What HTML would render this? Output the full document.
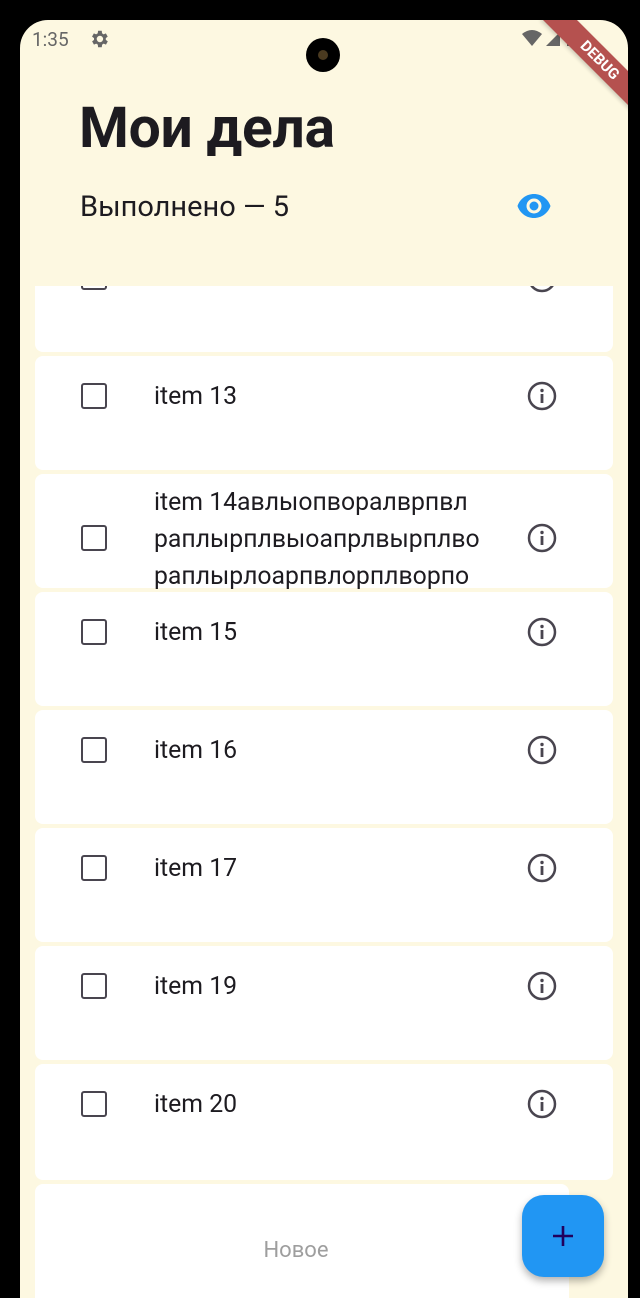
<!DOCTYPE html>
<html><head><meta charset="utf-8"><style>
*{margin:0;padding:0;box-sizing:border-box}
html,body{width:640px;height:1298px;overflow:hidden}
body{background:#000;position:relative;font-family:"Roboto","Liberation Sans","DejaVu Sans",sans-serif}
.screen{position:absolute;left:20px;top:20px;width:608px;height:1278px;background:#fdf8e1;border-radius:28px 28px 0 0;overflow:hidden}
.card{position:absolute;left:15px;width:578px;background:#fff;border-radius:8px}
.cb{position:absolute;left:46px;width:26px;height:26px;border:2.8px solid #49454f;border-radius:3px}
.txt{position:absolute;left:119px;font-size:24.8px;color:#1d1b20;line-height:37px;white-space:nowrap}
.info{position:absolute;left:491px;width:32px;height:32px}
</style></head><body>
<div class="screen">
 <div style="position:absolute;left:12px;top:8px;font-size:19px;color:#666">1:35</div>
 <svg style="position:absolute;left:68px;top:8px" width="22" height="22" viewBox="0 0 24 24"><path fill="#666" d="M19.4 13a7.5 7.5 0 000-2l2.1-1.6-2-3.5-2.5 1a7 7 0 00-1.7-1L15 3h-4l-.4 2.9a7 7 0 00-1.7 1l-2.5-1-2 3.5L6.6 11a7.5 7.5 0 000 2l-2.1 1.6 2 3.5 2.5-1a7 7 0 001.7 1L11 21h4l.4-2.9a7 7 0 001.7-1l2.5 1 2-3.5zM13 15.5a3.5 3.5 0 110-7 3.5 3.5 0 010 7z"/></svg>
 <div style="position:absolute;left:286px;top:18px;width:34px;height:34px;border-radius:50%;background:#000"><div style="position:absolute;left:12px;top:12px;width:10px;height:10px;border-radius:50%;background:#4a3a20"></div></div>
 <svg style="position:absolute;left:500px;top:8px" width="80" height="22"><path d="M2 6 Q12 -2 22 6 L12 18Z" fill="#666"/><path d="M26 18 L40 4 L40 18Z" fill="#666"/><rect x="47" y="2" width="9" height="16" fill="#666"/></svg>
 <div style="position:absolute;left:510px;top:28px;width:140px;height:24px;background:#b5514f;color:#fff;font-size:15px;font-weight:bold;text-align:center;line-height:24px;transform:rotate(45deg);transform-origin:center;box-shadow:0 2px 4px rgba(0,0,0,.2)">DEBUG</div>
 <div style="position:absolute;left:59px;top:74px;font-size:57px;font-weight:bold;color:#1d1b20;letter-spacing:-0.3px">Мои дела</div>
 <div style="position:absolute;left:60px;top:170px;font-size:29px;color:#1d1b20">Выполнено — 5</div>
 <svg style="position:absolute;left:496px;top:172px" width="36" height="28" viewBox="0 0 24 18"><path fill="#2196f3" d="M12 1C7 1 2.7 4.1 1 9c1.7 4.9 6 8 11 8s9.3-3.1 11-8c-1.7-4.9-6-8-11-8zm0 13a5 5 0 110-10 5 5 0 010 10zm0-8a3 3 0 100 6 3 3 0 000-6z"/></svg>
</div>
<div style="position:absolute;left:20px;top:286px;width:608px;height:1012px;overflow:hidden">
 <div class="card" style="top:-114px;height:180px"><div class="cb" style="top:92px"></div><svg class="info" style="top:90px" viewBox="0 0 32 32"><circle cx="16" cy="16" r="13" fill="none" stroke="#49454f" stroke-width="2.5"/></svg></div>
 <div class="card" style="top:70px;height:114px"><div class="cb" style="top:27px"></div><div class="txt" style="top:22px">item 13</div><svg class="info" style="top:24px" viewBox="0 0 32 32"><circle cx="16" cy="16" r="13" fill="none" stroke="#49454f" stroke-width="2.5"/><rect x="14.6" y="14" width="2.8" height="9" fill="#49454f"/><circle cx="16" cy="10.5" r="1.7" fill="#49454f"/></svg></div>
 <div class="card" style="top:188px;height:114px"><div class="cb" style="top:51px"></div><div class="txt" style="top:10px">item 14авлыопворалврпвл<br>раплырплвыоапрлвырплво<br>раплырлоарпвлорплворпо</div><svg class="info" style="top:48px" viewBox="0 0 32 32"><circle cx="16" cy="16" r="13" fill="none" stroke="#49454f" stroke-width="2.5"/><rect x="14.6" y="14" width="2.8" height="9" fill="#49454f"/><circle cx="16" cy="10.5" r="1.7" fill="#49454f"/></svg></div>
 <div class="card" style="top:306px;height:114px"><div class="cb" style="top:27px"></div><div class="txt" style="top:22px">item 15</div><svg class="info" style="top:24px" viewBox="0 0 32 32"><circle cx="16" cy="16" r="13" fill="none" stroke="#49454f" stroke-width="2.5"/><rect x="14.6" y="14" width="2.8" height="9" fill="#49454f"/><circle cx="16" cy="10.5" r="1.7" fill="#49454f"/></svg></div>
 <div class="card" style="top:424px;height:114px"><div class="cb" style="top:27px"></div><div class="txt" style="top:22px">item 16</div><svg class="info" style="top:24px" viewBox="0 0 32 32"><circle cx="16" cy="16" r="13" fill="none" stroke="#49454f" stroke-width="2.5"/><rect x="14.6" y="14" width="2.8" height="9" fill="#49454f"/><circle cx="16" cy="10.5" r="1.7" fill="#49454f"/></svg></div>
 <div class="card" style="top:542px;height:114px"><div class="cb" style="top:27px"></div><div class="txt" style="top:22px">item 17</div><svg class="info" style="top:24px" viewBox="0 0 32 32"><circle cx="16" cy="16" r="13" fill="none" stroke="#49454f" stroke-width="2.5"/><rect x="14.6" y="14" width="2.8" height="9" fill="#49454f"/><circle cx="16" cy="10.5" r="1.7" fill="#49454f"/></svg></div>
 <div class="card" style="top:660px;height:114px"><div class="cb" style="top:27px"></div><div class="txt" style="top:22px">item 19</div><svg class="info" style="top:24px" viewBox="0 0 32 32"><circle cx="16" cy="16" r="13" fill="none" stroke="#49454f" stroke-width="2.5"/><rect x="14.6" y="14" width="2.8" height="9" fill="#49454f"/><circle cx="16" cy="10.5" r="1.7" fill="#49454f"/></svg></div>
 <div class="card" style="top:778px;height:116px"><div class="cb" style="top:27px"></div><div class="txt" style="top:22px">item 20</div><svg class="info" style="top:24px" viewBox="0 0 32 32"><circle cx="16" cy="16" r="13" fill="none" stroke="#49454f" stroke-width="2.5"/><rect x="14.6" y="14" width="2.8" height="9" fill="#49454f"/><circle cx="16" cy="10.5" r="1.7" fill="#49454f"/></svg></div>
 <div class="card" style="top:898px;height:114px;width:534px;border-radius:8px 8px 0 0"><div style="position:absolute;left:0;width:522px;top:54px;text-align:center;font-size:22px;color:#9e9e9e">Новое</div></div>
</div>
<div style="position:absolute;left:522px;top:1195px;width:82px;height:82px;border-radius:22px;background:#2196f3;box-shadow:0 4px 8px rgba(0,0,0,0.3)">
 <svg style="position:absolute;left:29px;top:29px" width="24" height="24"><path d="M12 2V22M2 12H22" stroke="#21005d" stroke-width="2.6"/></svg>
</div>
</body></html>
